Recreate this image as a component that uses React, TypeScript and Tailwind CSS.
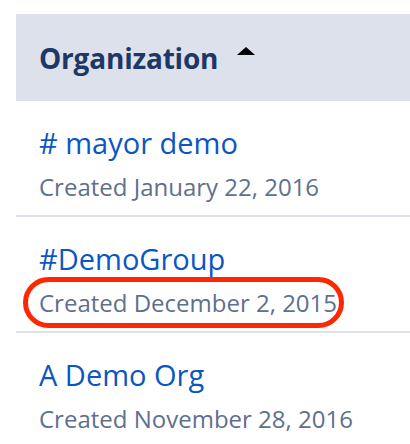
const rows = [
  { name: "# mayor demo", created: "Created January 22, 2016", circled: false },
  { name: "#DemoGroup", created: "Created December 2, 2015", circled: true },
  { name: "A Demo Org", created: "Created November 28, 2016", circled: false },
];

export default function App() {
  return (
    <div className="w-[410px] h-[444px] overflow-hidden bg-white pt-[14px] pl-[16px] font-['Open_Sans',sans-serif]">
      {/* Sortable column header */}
      <div className="h-[87px] bg-[#dde1eb] flex items-center pl-[23px]">
        <span className="text-[28px] font-bold text-[#1d3766] tracking-[-0.2px]">Organization</span>
        <svg className="self-start mt-[33px] ml-[19px]" width="18" height="8" viewBox="0 0 18 8">
          <path d="M9 0 L18 8 L0 8 Z" fill="#000" />
        </svg>
      </div>

      {rows.map((row) => (
        <div key={row.name} className="h-[116px] border-b-2 border-[#dde1eb] pl-[23px] pt-[24px]">
          <div className="text-[29px] leading-[36px] text-[#0b56c2]">{row.name}</div>
          <div className="relative inline-block mt-[11px] text-[24px] leading-[30px] text-[#5f6f8e]">
            {row.created}
            {row.circled && (
              <span className="absolute -left-[16px] -right-[7px] -top-[11px] -bottom-[10px] rounded-full border-[5px] border-[#ff2600]" />
            )}
          </div>
        </div>
      ))}
    </div>
  );
}
